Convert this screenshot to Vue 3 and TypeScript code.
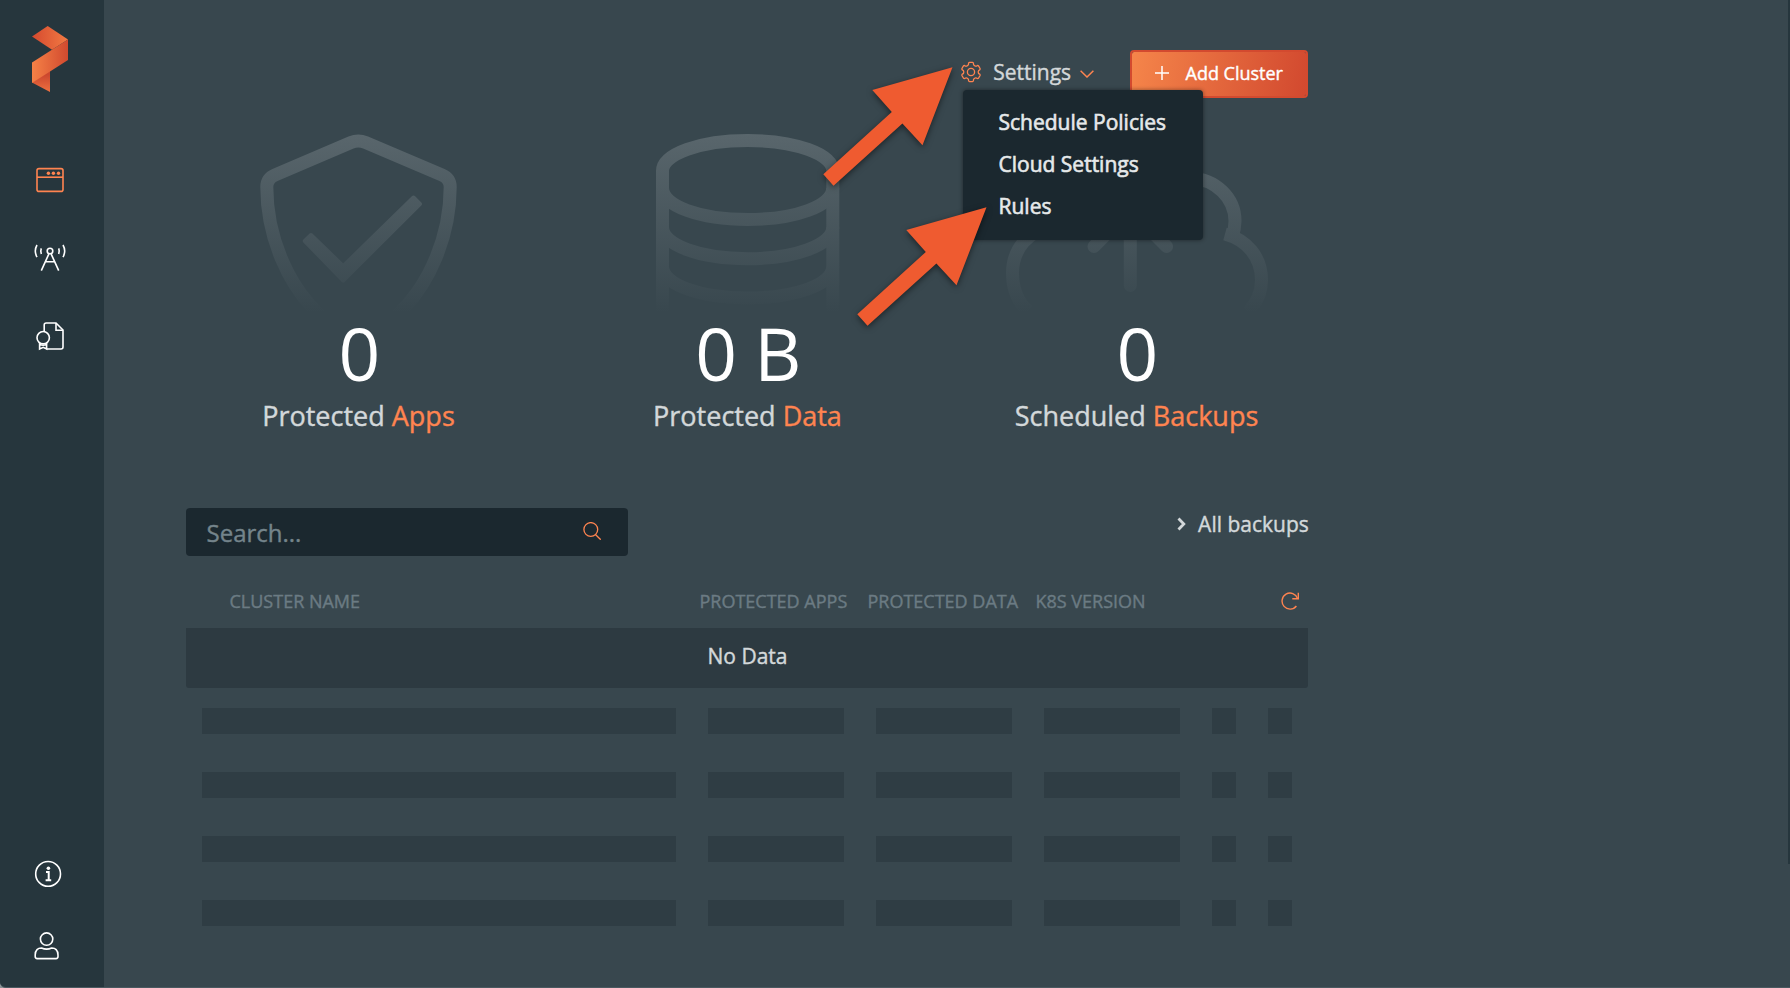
<script setup lang="ts">
import { ref } from 'vue'

interface Stat {
  id: 'apps' | 'data' | 'backups'
  value: string
  label: string
  accent: string
}

const stats: Stat[] = [
  { id: 'apps', value: '0', label: 'Protected', accent: 'Apps' },
  { id: 'data', value: '0 B', label: 'Protected', accent: 'Data' },
  { id: 'backups', value: '0', label: 'Scheduled', accent: 'Backups' },
]

const menuItems: string[] = ['Schedule Policies', 'Cloud Settings', 'Rules']
const columns: string[] = ['Cluster name', 'Protected apps', 'Protected data', 'K8s version']
const search = ref('')

function gearPath(teeth: number, outer: number, inner: number): string {
  const point = (deg: number, r: number): string => {
    const a = (deg * Math.PI) / 180
    return `${(11 + r * Math.cos(a)).toFixed(2)} ${(11 + r * Math.sin(a)).toFixed(2)}`
  }
  const parts: string[] = []
  for (let i = 0; i < teeth; i++) {
    const c = -90 + (360 / teeth) * i
    parts.push(`${i === 0 ? 'M' : 'L'}${point(c - 15, outer - 0.4)}`)
    parts.push(`Q${point(c - 12, outer)} ${point(c - 9, outer)}`)
    parts.push(`L${point(c + 9, outer)}`)
    parts.push(`Q${point(c + 12, outer)} ${point(c + 15, outer - 0.4)}`)
    parts.push(`Q${point(c + 18, inner)} ${point(c + 26, inner)}`)
    parts.push(`L${point(c + 34, inner)}`)
    parts.push(`Q${point(c + 42, inner)} ${point(c + 45, outer - 0.4)}`)
  }
  return parts.join(' ') + 'Z'
}

const gear = gearPath(6, 9.7, 7.3)
</script>

<template>
  <div class="app">
    <aside class="sidebar">
      <svg class="logo" viewBox="0 0 36 66">
        <defs>
          <linearGradient id="lg-top" x1="0" x2="1">
            <stop offset="0" stop-color="#d54a2f" />
            <stop offset="1" stop-color="#f27a43" />
          </linearGradient>
          <linearGradient id="lg-band" x1="0" x2="1">
            <stop offset="0" stop-color="#f58146" />
            <stop offset="1" stop-color="#d24a2f" />
          </linearGradient>
          <linearGradient id="lg-tail" x1="0" x2="0" y1="0" y2="1">
            <stop offset="0.2" stop-color="#cb472e" />
            <stop offset="1" stop-color="#ee7040" />
          </linearGradient>
        </defs>
        <polygon points="0,10.5 15.7,0 36,13.4 20,23.8" fill="url(#lg-top)" />
        <polygon points="0,56.5 18,44 18,66" fill="url(#lg-tail)" />
        <polygon points="36,13.4 36,34 0,57 0,36.5" fill="url(#lg-band)" />
      </svg>

      <nav class="nav">
        <svg class="icon active" viewBox="0 0 36 36">
          <rect x="5" y="6.6" width="26" height="22.8" rx="2" />
          <path d="M5 15.2H31" />
          <g class="solid">
            <circle cx="16.4" cy="11.2" r="1.7" />
            <circle cx="21.4" cy="11.2" r="1.7" />
            <circle cx="26.5" cy="11.2" r="1.7" />
          </g>
        </svg>
        <svg class="icon" viewBox="0 0 36 36">
          <circle cx="18" cy="11" r="2.8" />
          <path d="M16.9 13.8L9.3 30.6M19.1 13.8L26.7 30.6M13.4 21.7H22.6" />
          <path d="M9.3 8.4Q8.2 11.2 9.3 14M26.7 8.4Q27.8 11.2 26.7 14" />
          <path d="M5 5Q1.6 11 5 17.2M31 5Q34.4 11 31 17.2" />
        </svg>
        <svg class="icon" viewBox="0 0 36 36">
          <path d="M12.2 13.2V7Q12.2 5 14.2 5H24L31 12V29Q31 31 29 31H14.5" />
          <path d="M24 5V12.2H31" />
          <circle cx="11.2" cy="19.7" r="6.2" />
          <path d="M7.6 25V31L11.2 29.3L14.6 31V25M7.6 26.6Q11.2 28 14.6 26.6" />
        </svg>
      </nav>

      <div class="account">
        <svg class="icon" viewBox="0 0 36 36">
          <circle cx="16.1" cy="17.9" r="12.4" />
          <circle class="solid" cx="16.4" cy="12.2" r="1.8" />
          <path class="thick" d="M14 16H16.7V24.2M13.6 24.3H19.2" />
        </svg>
        <svg class="icon" viewBox="0 0 36 36">
          <circle cx="14.6" cy="11.1" r="6.2" />
          <path d="M3.2 28.6V27C3.2 22 6 19.9 9.5 20Q14.6 22.2 19.7 20C23.2 19.9 26 22 26 27V28.6Q26 30.6 24 30.6H5.2Q3.2 30.6 3.2 28.6Z" />
        </svg>
      </div>
    </aside>

    <main class="main">
      <header class="toolbar">
        <div class="settings">
          <svg class="gear" viewBox="0 0 22 22">
            <path :d="gear" />
            <circle cx="11" cy="11" r="3.6" />
          </svg>
          <span class="settings-label">Settings</span>
          <svg class="caret" viewBox="0 0 14 8"><path d="M0.6 0.8L7 7L13.4 0.8" /></svg>
          <ul class="menu">
            <li v-for="item in menuItems" :key="item">{{ item }}</li>
          </ul>
        </div>
        <button class="add" type="button">
          <svg class="plus" viewBox="0 0 14 14"><path d="M7 0V14M0 7H14" /></svg>
          Add Cluster
        </button>
      </header>

      <section class="stats">
        <div v-for="stat in stats" :key="stat.id" class="stat">
          <svg v-if="stat.id === 'apps'" class="art" viewBox="227 134 262 178">
            <defs>
              <linearGradient id="fade" gradientUnits="userSpaceOnUse" x1="0" x2="0" y1="134" y2="312">
                <stop offset="0" stop-color="#59666c" />
                <stop offset="1" stop-color="#38474e" />
              </linearGradient>
            </defs>
            <path
              class="line"
              d="M320 315C287 285 266.8 235 266.8 187Q266.8 178.5 275 175L351 142.5Q358.3 139.5 365.6 142.5L442 175Q450.2 178.5 450.2 187C450.2 235 430 285 397 315"
            />
            <polygon class="tick" points="304.8,241 311,235 343.2,266.1 413.5,197.5 419.9,204 343.2,280.5" />
          </svg>
          <svg v-else-if="stat.id === 'data'" class="art" viewBox="616 134 262 178">
            <path class="line" d="M662.5 320V171C662.5 154 700 140.5 747.6 140.5S832.8 154 832.8 171V320" />
            <path
              class="line"
              d="M662.5 188C662.5 206 700 219.5 747.6 219.5S832.8 206 832.8 188M662.5 227.3C662.5 245 700 258.7 747.6 258.7S832.8 245 832.8 227.3M662.5 266.5C662.5 284.5 700 298 747.6 298S832.8 284.5 832.8 266.5"
            />
          </svg>
          <svg v-else class="art wide" viewBox="1005 134 264 178">
            <path
              class="line"
              d="M1028 311C1018 302 1012.5 288 1012.5 273C1012.5 249 1029 230 1052 227C1052 180 1080 141 1115 141C1135 141 1150 158 1161 186C1172 178 1181 177.5 1190 178C1216 179 1235 198 1235 221Q1235 229 1232 237"
            />
            <path class="line" d="M1225 234C1247 240 1261.5 257 1261.5 280C1261.5 291 1257 303 1248 312" />
            <path class="line soft" d="M1130.3 210V285.5M1094 246.5L1130.3 210L1166.6 246.5" />
          </svg>
          <div class="value">{{ stat.value }}</div>
          <div class="caption">{{ stat.label }} <span class="accent">{{ stat.accent }}</span></div>
        </div>
      </section>

      <section class="filters">
        <label class="search">
          <input v-model="search" type="text" placeholder="Search..." />
          <svg class="lens" viewBox="0 0 18 18">
            <circle cx="7.8" cy="7.5" r="6.9" />
            <path d="M12.4 12.5L17.7 17.7" />
          </svg>
        </label>
        <a class="all">
          <svg class="chevron" viewBox="0 0 9 14"><path d="M1.5 1.5L6.8 7L1.5 12.5" /></svg>
          All backups
        </a>
      </section>

      <section class="table">
        <div class="head grid">
          <span v-for="name in columns" :key="name">{{ name }}</span>
          <svg class="refresh" viewBox="0 0 18 18">
            <path d="M15.4 14A8 8 0 1 1 16.6 6.4" />
            <path d="M17.3 0.8V6.7H11.3" />
          </svg>
        </div>
        <div class="empty">No Data</div>
        <div v-for="row in 4" :key="row" class="skeleton grid">
          <i v-for="cell in 6" :key="cell"></i>
        </div>
      </section>
    </main>

    <div class="edge"></div>
    <svg class="arrows" viewBox="0 0 1790 988">
      <polygon
        v-for="n in 2"
        :key="n"
        points="952.5,67.3 872.3,90 891.8,112 823.3,174.3 833.5,185.7 902.4,123.6 922.5,145.3"
        :transform="n === 2 ? 'translate(34 140)' : undefined"
      />
    </svg>
  </div>
</template>

<style>
html,
body {
  margin: 0;
  background: #8b9396;
}
</style>

<style scoped>
.app {
  position: relative;
  display: flex;
  width: 1790px;
  height: 988px;
  overflow: hidden;
  box-sizing: border-box;
  border-bottom: 1px solid #4a5960;
  border-bottom-left-radius: 6px;
  background: #38474e;
  color: #d3d8da;
  font-family: 'Open Sans', 'Noto Sans', sans-serif;
  font-size: 21px;
  -webkit-text-stroke-width: 0.4px;
}
.sidebar {
  display: flex;
  flex-direction: column;
  box-sizing: border-box;
  width: 104px;
  padding: 26px 32px 23px;
  background: #26363d;
}
.logo {
  width: 36px;
  height: 66px;
}
.nav {
  display: flex;
  flex-direction: column;
  gap: 42px;
  margin-top: 70px;
}
.account {
  display: flex;
  flex-direction: column;
  gap: 36px;
  margin-top: auto;
}
.icon {
  display: block;
  width: 36px;
  height: 36px;
  fill: none;
  stroke: #fff;
  stroke-width: 1.6;
}
.icon.active {
  stroke: #ff8450;
}
.solid {
  fill: #fff;
  stroke: none;
}
.active .solid {
  fill: #ff8450;
}
.thick {
  stroke-width: 2;
}
.main {
  width: 1122px;
  padding: 50px 0 0 82px;
}
.toolbar {
  display: flex;
  justify-content: flex-end;
  height: 48px;
}
.settings {
  position: relative;
  display: flex;
  align-items: center;
  width: 170px;
  height: 44px;
}
.gear {
  width: 22px;
  height: 22px;
  fill: none;
  stroke: #ff8450;
  stroke-width: 1.3;
}
.settings-label {
  margin-left: 11.2px;
  line-height: 28px;
}
.caret {
  width: 14px;
  height: 8px;
  margin: 4px 0 0 8.5px;
  fill: none;
  stroke: #ff8450;
  stroke-width: 1.5;
}
.menu {
  position: absolute;
  z-index: 2;
  top: 40px;
  left: 2.5px;
  box-sizing: border-box;
  width: 240px;
  height: 150px;
  margin: 0;
  padding: 11px 0 0 36px;
  list-style: none;
  background: #1b282f;
  border-radius: 4px;
  box-shadow: 0 0 4px rgba(0, 0, 0, 0.45);
  color: #e6e9ea;
}
.menu li {
  height: 42px;
  line-height: 42px;
  -webkit-text-stroke-width: 0.6px;
}
.add {
  display: flex;
  align-items: center;
  box-sizing: border-box;
  width: 178px;
  height: 48px;
  padding: 0 0 2px 23px;
  border: 2px solid #d34a2f;
  border-radius: 4px;
  background: linear-gradient(100deg, #f5854a, #d2492f) padding-box;
  color: #fff;
  font-family: inherit;
  font-size: 18px;
  -webkit-text-stroke-width: 0.4px;
}
.plus {
  width: 14px;
  height: 14px;
  margin-right: 16.5px;
  fill: none;
  stroke: #fff;
  stroke-width: 1.5;
}
.stats {
  display: grid;
  grid-template-columns: repeat(3, 389px);
  margin: 36px -22.5px 0;
}
.stat {
  display: flex;
  flex-direction: column;
  align-items: center;
}
.art {
  display: block;
  width: 262px;
  height: 178px;
}
.art.wide {
  width: 264px;
  margin-left: 2px;
}
.line {
  fill: none;
  stroke: url(#fade);
  stroke-width: 13;
}
.soft {
  stroke-linecap: round;
}
.tick {
  fill: url(#fade);
  stroke: url(#fade);
  stroke-width: 4;
  stroke-linejoin: round;
}
.value {
  height: 80px;
  padding-left: 2px;
  line-height: 82px;
  font-size: 73px;
  letter-spacing: -0.8px;
  color: #fff;
  -webkit-text-stroke-width: 0;
}
.caption {
  margin-top: 6px;
  padding-left: 1px;
  line-height: 36px;
  font-size: 27px;
}
.accent {
  color: #ff8450;
}
.filters {
  display: flex;
  justify-content: space-between;
  align-items: flex-start;
  margin-top: 74px;
}
.search {
  display: flex;
  align-items: center;
  justify-content: space-between;
  box-sizing: border-box;
  width: 442px;
  height: 48px;
  padding: 0 27px 0 20.5px;
  border-radius: 4px;
  background: #1b282f;
}
.search input {
  width: 300px;
  height: 46px;
  padding: 0;
  border: 0;
  outline: 0;
  background: none;
  color: #d3d8da;
  font-family: inherit;
  font-size: 24px;
  -webkit-text-stroke-width: 0.4px;
}
.search input::placeholder {
  color: #74848b;
  opacity: 1;
}
.lens {
  width: 18px;
  height: 18px;
  margin-top: -2px;
  fill: none;
  stroke: #ff8450;
  stroke-width: 1.3;
}
.all {
  display: flex;
  align-items: center;
  margin-right: -0.8px;
  line-height: 32px;
}
.chevron {
  width: 9px;
  height: 14px;
  margin-right: 12.5px;
  fill: none;
  stroke: #d3d8da;
  stroke-width: 2.8;
}
.grid {
  display: grid;
  grid-template-columns: 506px repeat(3, 168px) 56px 56px;
}
.head {
  align-items: center;
  height: 54px;
  margin-top: 18px;
  color: #6b7b83;
  font-size: 18px;
  text-transform: uppercase;
  white-space: nowrap;
}
.head span {
  padding-left: 7.5px;
}
.head span:first-child {
  padding-left: 43.5px;
}
.refresh {
  grid-column: 6;
  width: 18px;
  height: 18px;
  margin-left: 29px;
  fill: none;
  stroke: #ff8450;
  stroke-width: 1.4;
}
.empty {
  height: 60px;
  padding-left: 1px;
  line-height: 56px;
  border-radius: 0 0 3px 3px;
  background: #2d3a41;
  text-align: center;
}
.skeleton {
  height: 64px;
}
.skeleton i {
  height: 26px;
  margin: 20px 16px 0;
  background: #2f3d44;
}
.edge {
  position: absolute;
  top: 0;
  right: 0;
  width: 2px;
  height: 864px;
  background: #26363d;
}
.arrows {
  position: absolute;
  z-index: 3;
  inset: 0;
  width: 1790px;
  height: 988px;
  pointer-events: none;
  fill: #ef5b30;
  filter: drop-shadow(0 2px 3px rgba(0, 0, 0, 0.5));
}
</style>
